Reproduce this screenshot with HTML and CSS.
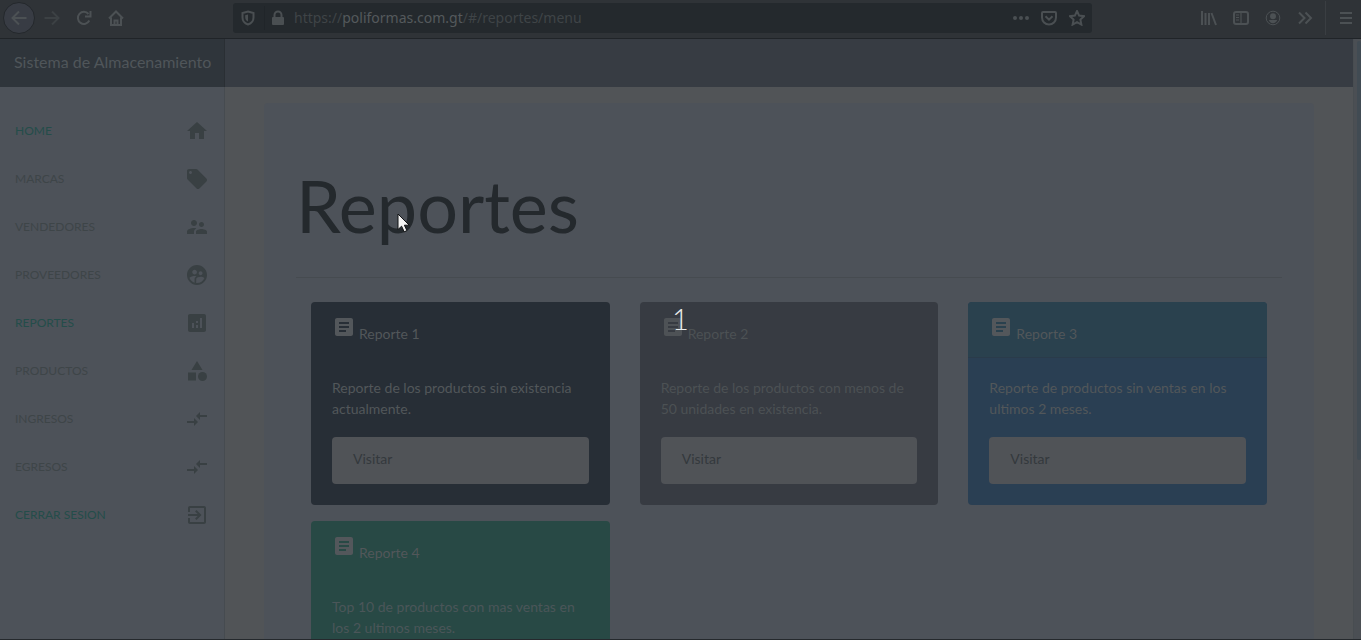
FILE: index.html
```html
<!DOCTYPE html>
<html lang="es">
<head>
<meta charset="utf-8">
<title>Sistema de Almacenamiento</title>
<link rel="stylesheet" href="styles.css">
</head>
<body>
<svg class="defs" aria-hidden="true">
  <symbol id="article" viewBox="0 0 24 24"><path d="M19 3H5c-1.100 0-2 .9-2 2v14c0 1.100.9 2 2 2h14c1.100 0 2-.9 2-2V5c0-1.100-.9-2-2-2zm-5 14H7v-2h7v2zm3-4H7v-2h10v2zm0-4H7V7h10v2z"/></symbol>
  <symbol id="arrows" viewBox="0 0 24 24"><path d="M9.010 14H2v2h7.010v3L13 15l-3.990-4v3zm5.980-1v-3H22V8h-7.010V5L11 9l3.990 4z"/></symbol>
</svg>
<header class="toolbar">
  <div class="tools">
    <button class="tool tool-back" aria-label="Atrás"><svg viewBox="0 0 16 16"><path d="M15.500 8H1.500M8 1.500 1.500 8 8 14.500"/></svg></button>
    <button class="tool tool-dim" aria-label="Adelante"><svg viewBox="0 0 16 16"><path d="M.5 8h14M8 1.500 14.500 8 8 14.500"/></svg></button>
    <button class="tool" aria-label="Recargar"><svg viewBox="0 0 16 16"><path d="M13.300 10.500A6 6 0 1 1 12.500 4M14.500 1v5.500H9"/></svg></button>
    <button class="tool" aria-label="Inicio"><svg viewBox="0 0 16 16"><path d="M1 8.500 8 1.500l7 7M3 7.500V15h10V7.500M6.500 15v-4.500h3V15"/></svg></button>
  </div>
  <div class="urlbar">
    <svg class="icon16" viewBox="0 0 16 16"><path d="M8 1.500 13.500 3v4.500c0 3.500-2.500 6-5.500 7-3-1-5.500-3.500-5.500-7V3z"/><path class="solid" d="M8 4.500v7C6 10.500 5.200 9 5.200 7V5.200z"/></svg>
    <span class="url-split"></span>
    <svg class="icon16" viewBox="0 0 16 16"><path d="M4.500 8V5a3.500 3.500 0 0 1 7 0v3"/><rect class="solid" x="2" y="7" width="12" height="8" rx="1"/></svg>
    <div class="url">https://<span class="host">poliformas.com.gt</span>/#/reportes/menu</div>
    <div class="url-actions">
      <svg class="icon16" viewBox="0 0 16 16"><g class="solid"><circle cx="2" cy="8" r="2"/><circle cx="8" cy="8" r="2"/><circle cx="14" cy="8" r="2"/></g></svg>
      <svg class="icon16" viewBox="0 0 16 16"><path d="M2 2h12a1 1 0 0 1 1 1v4.500a7 7 0 0 1-14 0V3a1 1 0 0 1 1-1zM4.500 6.300 8 9.700l3.500-3.400"/></svg>
      <svg class="icon16" viewBox="0 0 16 16"><path d="m8 1 2.100 4.600 5 .6-3.700 3.400 1 5L8 12.100l-4.400 2.500 1-5L.9 6.200l5-.6z"/></svg>
    </div>
  </div>
  <div class="tools tools-right">
    <button class="tool" aria-label="Biblioteca"><svg viewBox="0 0 16 16"><path d="M1 1v14M4.500 3v12M8 3v12M10.500 3l4.500 12"/></svg></button>
    <button class="tool" aria-label="Barra lateral"><svg viewBox="0 0 16 16"><rect x="1" y="2" width="14" height="12" rx="2"/><path d="M8 2v12M3 5h3M3 7.500h3M3 10h3" stroke-width="1.200"/></svg></button>
    <button class="tool" aria-label="Cuenta"><svg viewBox="0 0 16 16"><circle class="thin" cx="8" cy="8" r="6.800"/><circle class="solid" cx="8" cy="6.200" r="3"/><path class="solid" d="M3.800 10h8.400c-.6 2-2.300 3.200-4.200 3.200S4.400 12 3.800 10z"/></svg></button>
    <button class="tool" aria-label="Más herramientas"><svg viewBox="0 0 16 16"><path d="m2 2.500 5.500 5.500L2 13.500M8.500 2.500 14 8l-5.500 5.500"/></svg></button>
    <button class="tool tool-menu" aria-label="Menú"><svg viewBox="0 0 16 16"><path d="M2 3h12M2 8h12M2 13h12"/></svg></button>
  </div>
</header>
<div class="page">
  <aside class="sidebar">
    <div class="brand">Sistema de Almacenamiento</div>
    <nav class="nav">
      <a class="nav-link active" href="#home">HOME<svg viewBox="0 0 24 24"><path d="M10 20v-6h4v6h5v-8h3L12 3 2 12h3v8z"/></svg></a>
      <a class="nav-link" href="#marcas">MARCAS<svg viewBox="0 0 24 24"><path d="M21.410 11.580l-9-9C12.050 2.220 11.550 2 11 2H4c-1.100 0-2 .9-2 2v7c0 .55.220 1.050.59 1.420l9 9c.36.360.860.580 1.410.580.550 0 1.050-.220 1.410-.590l7-7c.370-.360.590-.860.590-1.410 0-.550-.230-1.060-.590-1.420zM5.500 7C4.670 7 4 6.330 4 5.500S4.670 4 5.500 4 7 4.670 7 5.500 6.330 7 5.500 7z"/></svg></a>
      <a class="nav-link" href="#vendedores">VENDEDORES<svg viewBox="0 0 24 24"><path d="M16.500 12c1.380 0 2.490-1.120 2.490-2.500S17.880 7 16.500 7 14 8.120 14 9.500s1.120 2.500 2.500 2.500zM9 11c1.660 0 2.990-1.340 2.990-3S10.660 5 9 5 6 6.340 6 8s1.340 3 3 3zm7.500 3c-1.830 0-5.500.92-5.500 2.750V19h11v-2.250c0-1.830-3.670-2.750-5.500-2.750zM9 13c-2.330 0-7 1.170-7 3.500V19h7v-2.250c0-.85.33-2.340 2.370-3.470C10.500 13.100 9.660 13 9 13z"/></svg></a>
      <a class="nav-link" href="#proveedores">PROVEEDORES<svg viewBox="0 0 24 24"><path d="M11.990 2c-5.520 0-10 4.480-10 10s4.480 10 10 10 10-4.480 10-10-4.480-10-10-10zm3.610 6.340c1.070 0 1.930.86 1.930 1.930s-.86 1.930-1.930 1.930-1.930-.86-1.930-1.930c-.01-1.070.86-1.930 1.930-1.930zm-6-1.580c1.300 0 2.360 1.060 2.360 2.360s-1.060 2.360-2.360 2.360-2.360-1.060-2.360-2.360c0-1.310 1.050-2.360 2.360-2.360zm0 9.130v3.750c-2.400-.75-4.300-2.600-5.140-4.960 1.050-1.120 3.670-1.690 5.140-1.690.53 0 1.200.08 1.900.22-1.640.87-1.900 2.020-1.900 2.680zM11.990 20c-.27 0-.53-.01-.79-.04v-4.070c0-1.420 2.940-2.130 4.400-2.130 1.070 0 2.920.39 3.840 1.150C18.280 17.880 15.390 20 11.990 20z"/></svg></a>
      <a class="nav-link active" href="#reportes">REPORTES<svg viewBox="0 0 24 24"><path d="M19 3H5c-1.100 0-2 .9-2 2v14c0 1.100.9 2 2 2h14c1.100 0 2-.9 2-2V5c0-1.100-.9-2-2-2zM9 17H7v-5h2v5zm4 0h-2v-3h2v3zm0-5h-2v-2h2v2zm4 5h-2V7h2v10z"/></svg></a>
      <a class="nav-link" href="#productos">PRODUCTOS<svg viewBox="0 0 24 24"><path d="M12 2l-5.500 9h11z"/><circle cx="17.500" cy="17.500" r="4.500"/><path d="M3 13.500h8v8H3z"/></svg></a>
      <a class="nav-link" href="#ingresos">INGRESOS<svg><use href="#arrows"/></svg></a>
      <a class="nav-link" href="#egresos">EGRESOS<svg><use href="#arrows"/></svg></a>
      <a class="nav-link active" href="#salir">CERRAR SESION<svg viewBox="0 0 24 24"><path d="M10.090 15.590L11.500 17l5-5-5-5-1.410 1.410L12.670 11H3v2h9.670l-2.580 2.590zM19 3H5c-1.110 0-2 .9-2 2v4h2V5h14v14H5v-4H3v4c0 1.100.89 2 2 2h14c1.100 0 2-.9 2-2V5c0-1.100-.9-2-2-2z"/></svg></a>
    </nav>
  </aside>
  <div class="content">
    <div class="topbar"></div>
    <main class="main">
      <section class="jumbotron">
        <h1 class="title">Reportes</h1>
        <hr class="rule">
        <div class="cards">
          <article class="card card-primary">
            <h2 class="card-header"><svg><use href="#article"/></svg>Reporte 1</h2>
            <div class="card-body"><p class="card-text">Reporte de los productos sin existencia actualmente.</p><a class="visit" href="#r1">Visitar</a></div>
          </article>
          <article class="card card-dark">
            <h2 class="card-header"><svg><use href="#article"/></svg>Reporte 2</h2>
            <div class="card-body"><p class="card-text">Reporte de los productos con menos de 50 unidades en existencia.</p><a class="visit" href="#r2">Visitar</a></div>
          </article>
          <article class="card card-info">
            <h2 class="card-header"><svg><use href="#article"/></svg>Reporte 3</h2>
            <div class="card-body"><p class="card-text">Reporte de productos sin ventas en los ultimos 2 meses.</p><a class="visit" href="#r3">Visitar</a></div>
          </article>
          <article class="card card-success">
            <h2 class="card-header"><svg><use href="#article"/></svg>Reporte 4</h2>
            <div class="card-body"><p class="card-text">Top 10 de productos con mas ventas en los 2 ultimos meses.</p><a class="visit" href="#r4">Visitar</a></div>
          </article>
        </div>
      </section>
    </main>
  </div>
  <div class="scrollbar"><div class="thumb"></div></div>
</div>
<div class="countdown">1</div>
<svg class="cursor" viewBox="0 0 13 20"><path d="M1 1v15.500l3.600-3.300 2.600 5.600 2.700-1.200-2.500-5.400h4.800z"/></svg>
</body>
</html>
```
FILE: styles.css
```css
* { box-sizing: border-box; }

body {
  margin: 0;
  height: 100vh;
  overflow: hidden;
  display: flex;
  flex-direction: column;
  position: relative;
  border-bottom: 1px solid #25292d;
  background: #515457;
  color: #52575a;
  font: 14px/21px Lato, "Liberation Sans", sans-serif;
}

.defs { position: absolute; width: 0; height: 0; }

.toolbar {
  flex: none;
  display: flex;
  align-items: center;
  justify-content: space-between;
  height: 39px;
  padding: 0 0 2px 3px;
  background: #2f3337;
  border-bottom: 1px solid #202428;
}

.tools { display: flex; align-items: center; }

.tool {
  display: flex;
  align-items: center;
  justify-content: center;
  width: 32px;
  height: 32px;
  padding: 0;
  border: 0;
  background: none;
  color: #4c5154;
}
.tool svg, .icon16 {
  flex: none;
  width: 16px;
  height: 16px;
  fill: none;
  stroke: currentColor;
  stroke-width: 2;
}
.tool .solid, .icon16 .solid { fill: currentColor; stroke: none; }
.tool .thin { stroke-width: 1; }
.tool-back { border: 1px solid #24282c; border-radius: 50%; background: #383c44; }
.tool-dim { margin-left: 1px; color: #3c4144; }
.tools-right { height: 36px; }
.tool-menu { width: 36px; height: 34px; margin-left: 4px; padding-left: 5px; border-left: 1px solid #3a3e42; }

.urlbar {
  display: flex;
  align-items: center;
  width: 859px;
  height: 30px;
  padding: 0 7px;
  border-radius: 3px;
  background: #24292d;
  color: #4a4f52;
}
.url-split { width: 1px; height: 24px; margin: 0 5px 0 8px; background: #202529; }
.url {
  flex: 1;
  margin-left: 8px;
  color: #3f4447;
  font: 14px/20px "Noto Sans", sans-serif;
}
.host { color: #54595c; }
.url-actions { display: flex; gap: 12px; }

.page { flex: 1; min-height: 0; display: flex; }

.sidebar {
  flex: none;
  width: 225px;
  background: #4d5259;
  box-shadow: inset -1px 0 #464b50;
}
.brand {
  height: 48px;
  padding-left: 14px;
  border-right: 1px solid #2a2f34;
  background: #2f353b;
  color: #50565a;
  font-size: 16px;
  line-height: 46px;
}
.nav { display: flex; flex-direction: column; padding-top: 20px; }
.nav-link {
  display: flex;
  align-items: center;
  justify-content: space-between;
  height: 48px;
  padding: 0 16px 0 15px;
  color: #3e4548;
  font-size: 12px;
  line-height: 20px;
  text-decoration: none;
}
.nav-link svg { width: 24px; height: 24px; fill: #394043; }
.nav-link.active { color: #244d4a; }

.content { flex: 1; min-width: 0; overflow: hidden; }
.topbar { height: 48px; background: #373c43; }
.main { padding: 16px 39px; }
.jumbotron { padding: 64px 32px; border-radius: 4px; background: #4d5259; }
.title { margin: 0; color: #24292d; font-size: 72px; font-weight: 400; line-height: 76px; }
.rule { margin: 34px 0 24px; border: 0; border-top: 1px solid #464b50; }

.cards {
  display: grid;
  grid-template-columns: repeat(3, 1fr);
  gap: 16px 30px;
  padding: 0 15px;
}
.card { border-radius: 4px; background: #272e36; }
.card-header {
  display: flex;
  gap: 3px;
  height: 56px;
  margin: 0;
  padding: 13px 21px;
  border-bottom: 1px solid transparent;
  font-size: 14px;
  font-weight: 400;
  line-height: 38px;
}
.card-header svg { width: 24px; height: 24px; fill: #53575b; }
.card-body { padding: 19px 21px 21px; }
.card-text { margin: 0 0 18px; }
.visit {
  display: block;
  height: 47px;
  padding: 11px 21px;
  border-radius: 4px;
  background: #505357;
  color: #34393d;
  text-decoration: none;
}
.card-dark { background: #373b42; color: #4c5154; }
.card-dark .card-header svg { fill: #4e5256; }
.card-info { background: #2a3f53; }
.card-info .card-header { border-radius: 4px 4px 0 0; border-color: #2a3b4a; background: #2a414e; }
.card-success { background: #284945; }
.card-success .card-text { color: #4b5659; }

.scrollbar { flex: none; width: 8px; padding: 2px 0 0 3px; border-left: 1px solid #484d51; background: #4b4f54; }
.thumb { height: 70%; border-radius: 3px; background: #414b53; }

.countdown {
  position: absolute;
  top: 301px;
  left: 672px;
  color: #e8eaea;
  font-size: 29px;
  font-weight: 300;
  line-height: 36px;
}
.cursor {
  position: absolute;
  top: 213px;
  left: 397px;
  width: 13px;
  height: 20px;
  fill: #f4f4f4;
  stroke: #101214;
}
```
